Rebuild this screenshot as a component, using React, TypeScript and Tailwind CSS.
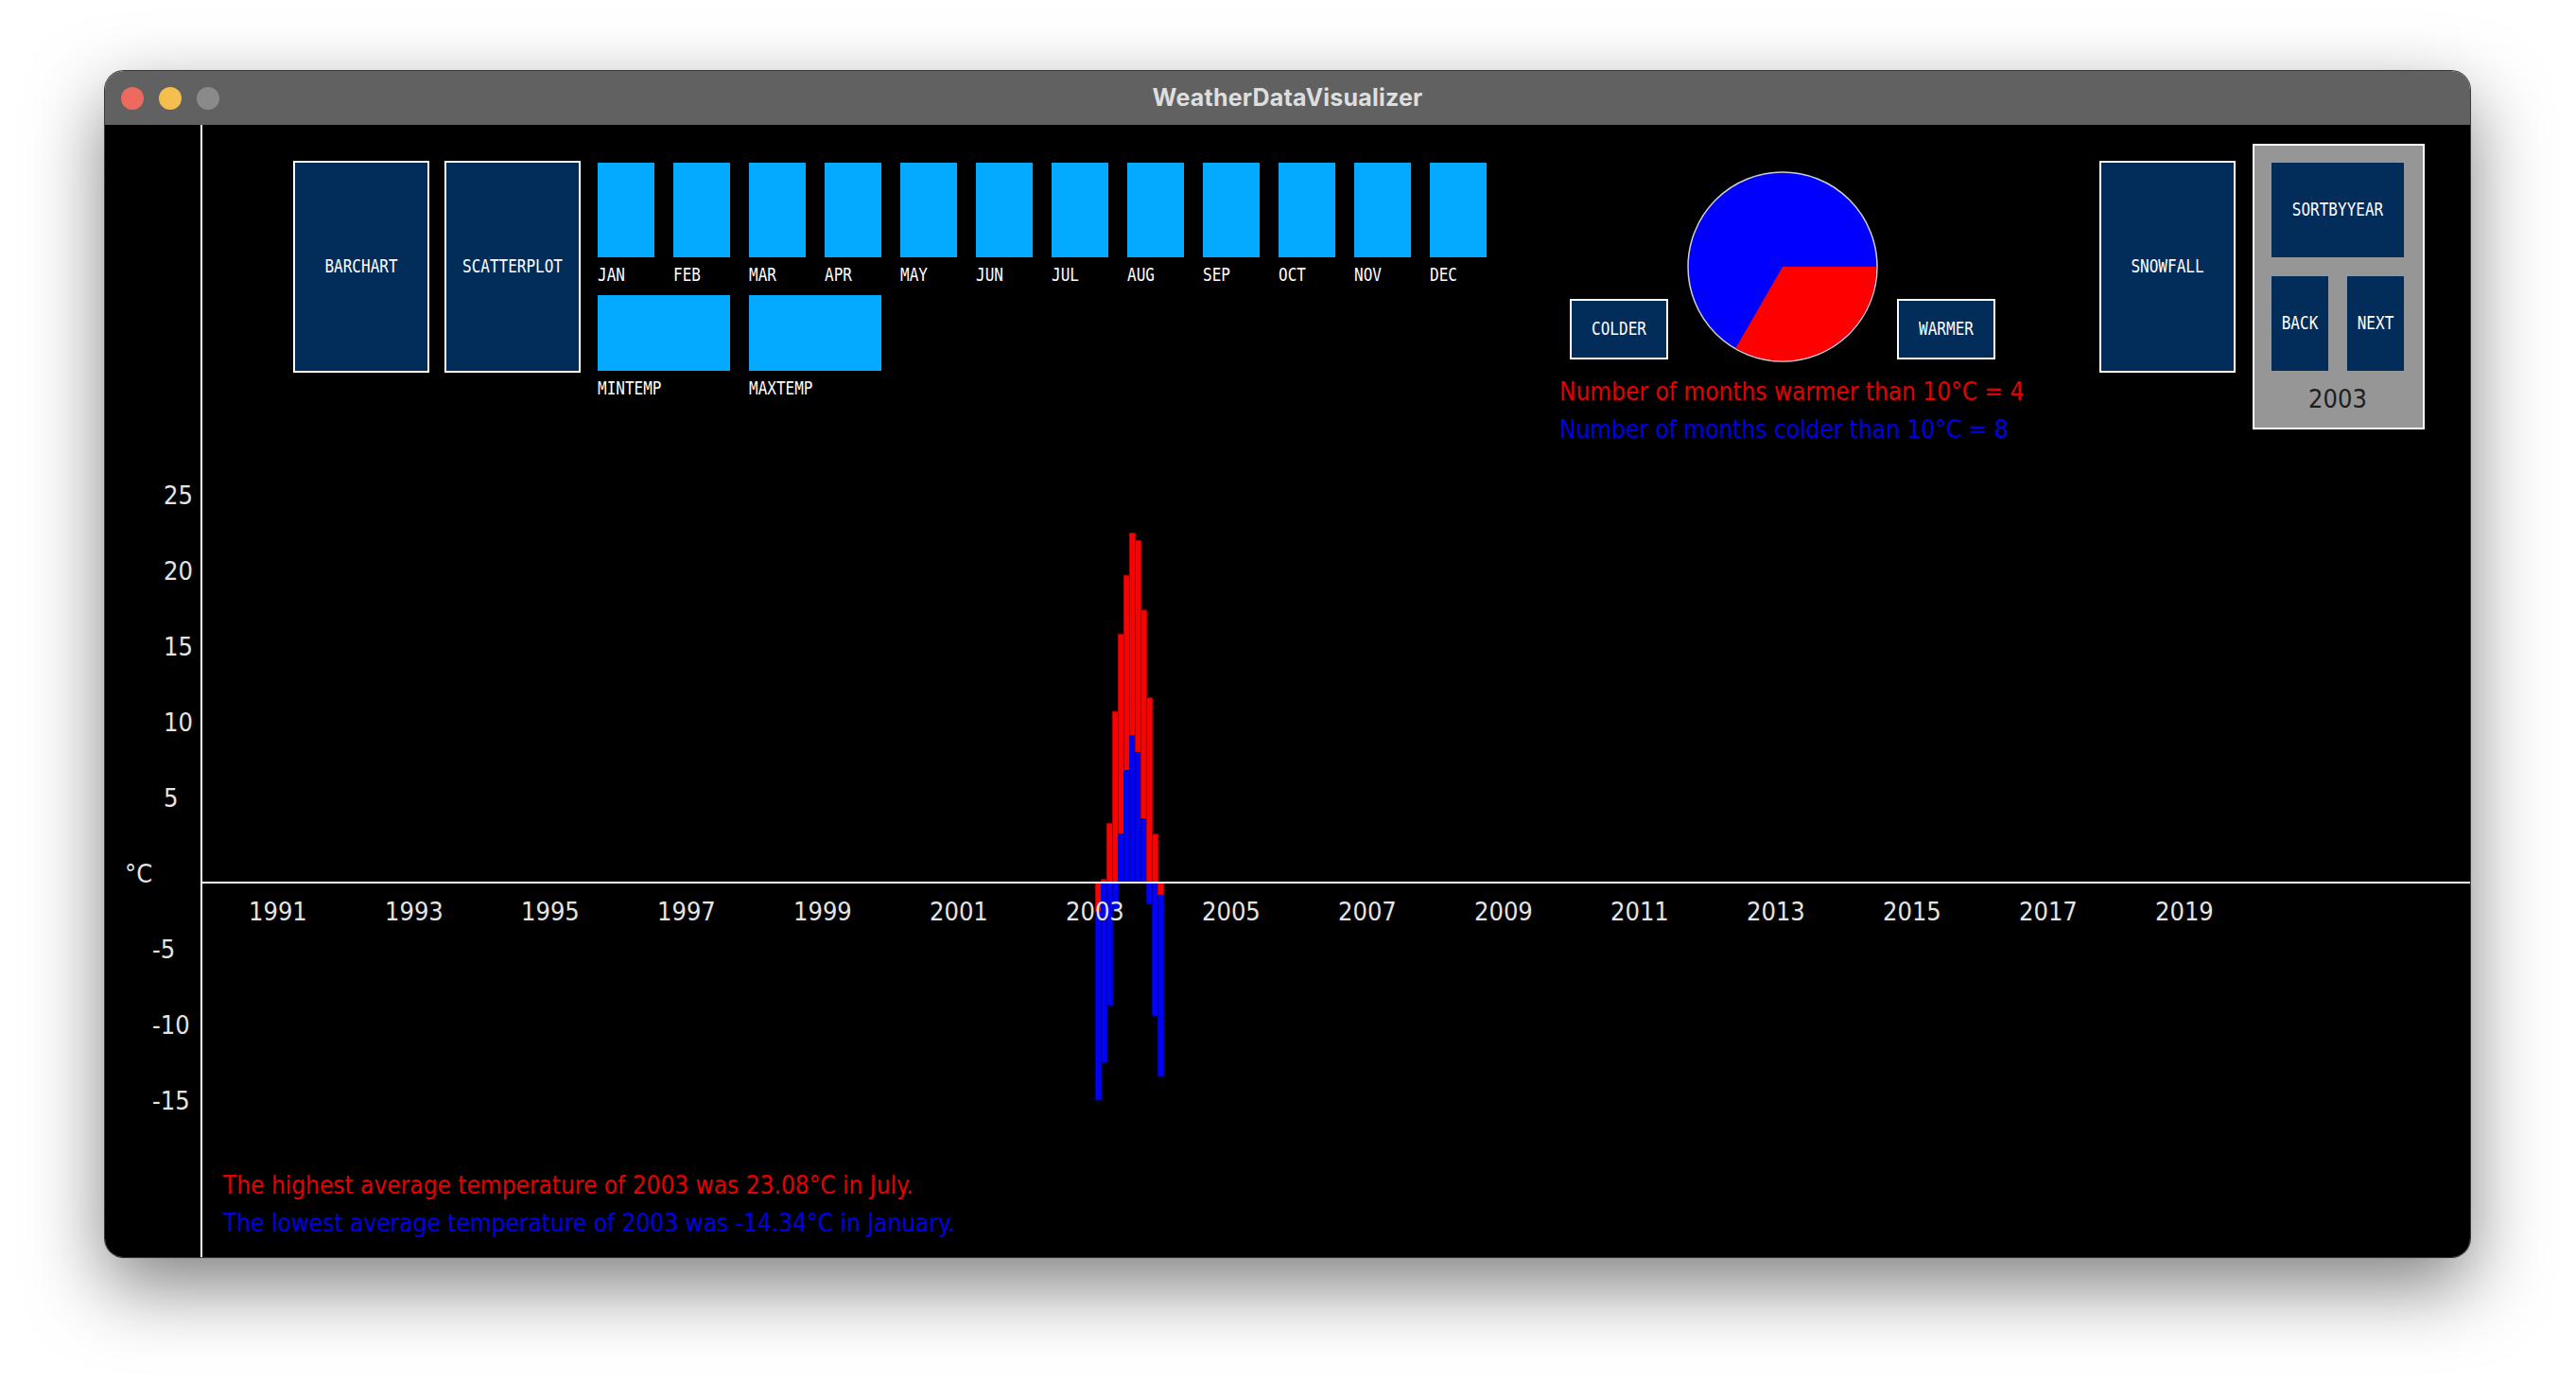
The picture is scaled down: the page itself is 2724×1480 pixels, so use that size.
import React from 'react';

const months = ['JAN', 'FEB', 'MAR', 'APR', 'MAY', 'JUN', 'JUL', 'AUG', 'SEP', 'OCT', 'NOV', 'DEC'];
const years = Array.from({ length: 15 }, (_, i) => 1991 + i * 2);
// monthly values for 2003, °C
const maxTemps = [-1.9, 0.2, 3.9, 11.3, 16.4, 20.3, 23.08, 22.6, 18.0, 12.2, 3.2, -0.8];
const minTemps = [-14.34, -11.9, -8.1, -1.8, 3.2, 7.4, 9.7, 8.6, 4.2, -1.4, -8.8, -12.8];
const yTicks = [
  { label: '25', indent: 'pl-[62px]' },
  { label: '20', indent: 'pl-[62px]' },
  { label: '15', indent: 'pl-[62px]' },
  { label: '10', indent: 'pl-[62px]' },
  { label: '5', indent: 'pl-[62px]' },
  { label: '°C', indent: 'pl-[21px]' },
  { label: '-5', indent: 'pl-[50px]' },
  { label: '-10', indent: 'pl-[50px]' },
  { label: '-15', indent: 'pl-[50px]' },
];

const pixel = "inline-block font-['DejaVu_Sans_Mono',monospace] text-[16px] leading-none text-white scale-y-120";
const sans = "font-['DejaVu_Sans',sans-serif] font-stretch-condensed";

const NavyButton: React.FC<{ label: string; className: string }> = ({ label, className }) => (
  <div className={`flex items-center justify-center bg-[#022c5a] shrink-0 ${className}`}>
    <span className={pixel}>{label}</span>
  </div>
);

const Bars: React.FC = () => {
  const zero = 393;
  const scale = 16;
  const rect = (v: number, i: number, fill: string, stroke: string) => {
    const h = Math.abs(v) * scale;
    const y = v >= 0 ? zero - h : zero;
    return <rect key={fill + i} x={i * 6 + 0.5} y={y} width={6} height={h} fill={fill} stroke={stroke} strokeWidth={1} />;
  };
  return (
    <svg width="80" height="640" className="absolute left-[944px] top-[86px]">
      {months.map((_, i) => {
        const a = maxTemps[i];
        const b = minTemps[i];
        // the shorter bar is drawn on top
        const red = rect(a, i, '#ff0000', '#b00000');
        const blue = rect(b, i, '#0000ff', '#0000b0');
        return Math.abs(a) > Math.abs(b) ? (
          <g key={i}>{red}{blue}</g>
        ) : (
          <g key={i}>{blue}{red}</g>
        );
      })}
    </svg>
  );
};

const App: React.FC = () => {
  return (
    <div className="min-h-screen w-full bg-white pl-[111px] pt-[75px] pb-[100px]">
      <div className="w-[2501px] h-[1254px] rounded-[20px] overflow-hidden flex flex-col shadow-[0_0_0_1px_#3a3a3a,0_30px_80px_rgba(0,0,0,0.5)]">
        {/* title bar */}
        <div className="h-[57px] shrink-0 bg-[#616161] grid grid-cols-[1fr_auto_1fr] items-center">
          <div className="flex items-center gap-[16px] pl-[17px]">
            <div className="w-[24px] h-[24px] rounded-full bg-[#ec6a5e]" />
            <div className="w-[24px] h-[24px] rounded-full bg-[#f4bf4f]" />
            <div className="w-[24px] h-[24px] rounded-full bg-[#8a8a8a]" />
          </div>
          <div className="font-['Inter',sans-serif] font-bold text-[25px] text-[#dedede] tracking-[0.2px]">WeatherDataVisualizer</div>
          <div />
        </div>

        {/* sketch canvas */}
        <div className="flex-1 bg-black flex">
          {/* y axis labels */}
          <div className={`w-[101px] shrink-0 flex flex-col pt-[352px] text-[27px] leading-[80px] text-[#e4e4e4] ${sans}`}>
            {yTicks.map((t) => (
              <div key={t.label} className={`h-[80px] ${t.indent}`}>{t.label}</div>
            ))}
          </div>

          <div className="flex-1 border-l-2 border-white flex flex-col">
            {/* controls */}
            <div className="h-[322px] shrink-0 flex items-start pt-[20px]">
              <NavyButton label="BARCHART" className="ml-[96px] mt-[18px] w-[144px] h-[224px] border-2 border-white" />
              <NavyButton label="SCATTERPLOT" className="ml-[16px] mt-[18px] w-[144px] h-[224px] border-2 border-white" />

              <div className="ml-[18px] mt-[20px] w-[940px] shrink-0 flex flex-col">
                <div className="flex gap-[20px]">
                  {months.map((m) => (
                    <div key={m} className="w-[60px] flex flex-col">
                      <div className="h-[100px] bg-[#03aaff]" />
                      <div className="mt-[6px] h-[34px]">
                        <span className={pixel}>{m}</span>
                      </div>
                    </div>
                  ))}
                </div>
                <div className="flex gap-[20px]">
                  {['MINTEMP', 'MAXTEMP'].map((m) => (
                    <div key={m} className="w-[140px] flex flex-col">
                      <div className="h-[80px] bg-[#03aaff]" />
                      <div className="mt-[6px]">
                        <span className={pixel}>{m}</span>
                      </div>
                    </div>
                  ))}
                </div>
              </div>

              {/* pie group */}
              <div className="ml-[77px] mt-[29px] w-[571px] shrink-0 flex flex-col">
                <div className="flex items-end gap-[20px]">
                  <NavyButton label="COLDER" className="ml-[11px] mb-[3px] w-[104px] h-[64px] border-2 border-white" />
                  <svg width="202" height="202" className="shrink-0">
                    <circle cx="101" cy="101" r="100" fill="#0000ff" stroke="#d0d0d0" strokeWidth="1.5" />
                    <path d="M101 101 L200.3 101 A99.3 99.3 0 0 1 51.35 187 Z" fill="#ff0000" />
                  </svg>
                  <NavyButton label="WARMER" className="mb-[3px] w-[104px] h-[64px] border-2 border-white" />
                </div>
                <div className={`mt-[11px] text-[26px] leading-[40px] ${sans}`}>
                  <div className="text-[#e60000]">Number of months warmer than 10°C = 4</div>
                  <div className="text-[#0000e6]">Number of months colder than 10°C = 8</div>
                </div>
              </div>

              <NavyButton label="SNOWFALL" className="mt-[18px] w-[144px] h-[224px] border-2 border-white" />

              {/* year selector */}
              <div className="ml-[18px] w-[182px] h-[302px] shrink-0 bg-[#969696] border-2 border-white pt-[18px] pl-[18px] flex flex-col">
                <NavyButton label="SORTBYYEAR" className="w-[140px] h-[100px]" />
                <div className="mt-[20px] flex gap-[20px]">
                  <NavyButton label="BACK" className="w-[60px] h-[100px]" />
                  <NavyButton label="NEXT" className="w-[60px] h-[100px]" />
                </div>
                <div className={`w-[140px] mt-[15px] text-center text-[27px] leading-[30px] text-[#1e1e1e] ${sans}`}>2003</div>
              </div>
            </div>

            {/* chart */}
            <div className="flex-1 relative">
              <Bars />
              <div className="absolute left-0 right-0 top-[478px] h-[2px] bg-white" />
              <div className={`absolute left-[49px] top-[496px] flex text-[27px] leading-[27px] text-[#e4e4e4] ${sans}`}>
                {years.map((y) => (
                  <div key={y} className="w-[144px]">{y}</div>
                ))}
              </div>
            </div>

            {/* summary */}
            <div className={`shrink-0 pl-[22px] pb-[16px] text-[26px] leading-[40px] ${sans}`}>
              <div className="text-[#e60000]">The highest average temperature of 2003 was 23.08°C in July.</div>
              <div className="text-[#0000e6]">The lowest average temperature of 2003 was -14.34°C in January.</div>
            </div>
          </div>
        </div>
      </div>
    </div>
  );
};

export default App;
